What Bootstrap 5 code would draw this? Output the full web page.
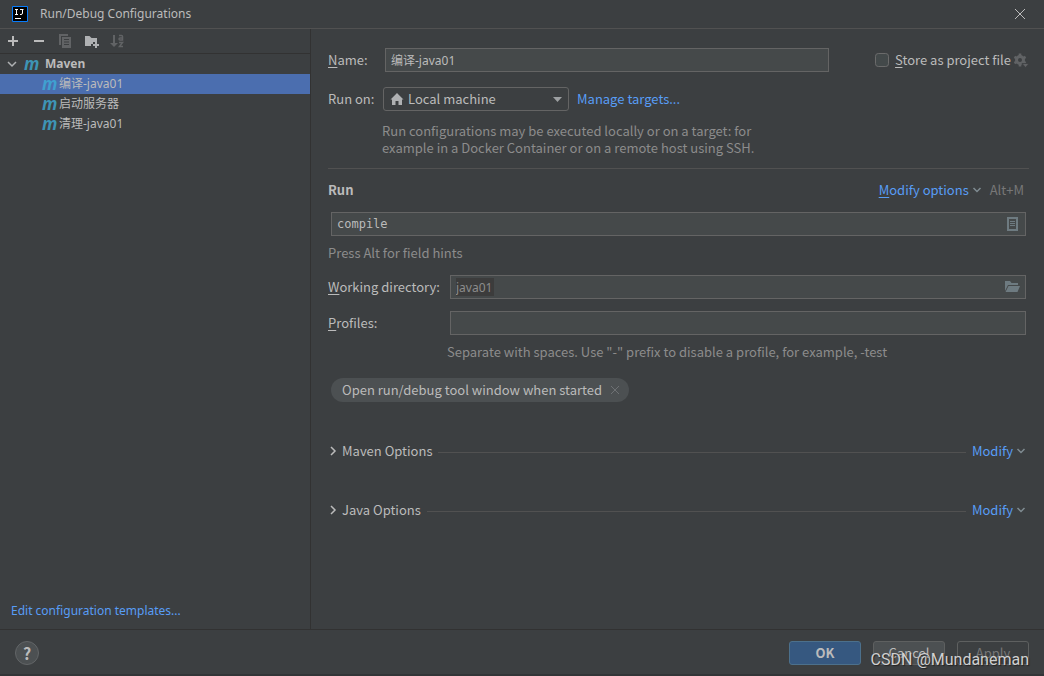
<!DOCTYPE html>
<html lang="en" data-bs-theme="dark">
<head>
<meta charset="utf-8">
<meta name="viewport" content="width=device-width, initial-scale=1">
<title>Run/Debug Configurations</title>
<link href="https://cdn.jsdelivr.net/npm/bootstrap@5.3.0/dist/css/bootstrap.min.css" rel="stylesheet">
<style>
  :root { --ink: #bbbbbb; --muted: #8c8c8c; --line: #323232; --rule: #515151; --edge: #646464; --field: #45494a; --blue: #589df6; }
  body { background: #3c3f41; color: var(--ink); font: 13px/18px "Noto Sans CJK SC", sans-serif; border-bottom: 2px solid #323537; }
  a, a:hover { color: var(--blue); text-decoration: none; }
  button { color: inherit; }
  .icon-btn { width: 16px; height: 16px; padding: 0; border: 0; background: none; display: block; }
  .icon-btn.narrow { width: 10px; }
  svg { display: block; }
  .ui-small { font: 12px/20px "Noto Sans", "Noto Sans CJK SC", sans-serif; }
  .titlebar { height: 29px; border-bottom: 1px solid var(--rule); padding: 0 16px 0 12px; gap: 12px; }
  .titlebar .caption { font-size: 12px; color: var(--ink); }
  .section-title { font-size: 13px; color: var(--ink); }
  .sidebar { width: 311px; border-right: 1px solid var(--line); }
  .tools { height: 25px; gap: 10px; padding: 0 5px; border-bottom: 1px solid var(--line); }
  .tree-row { height: 20px; }
  .tree-row.leaf { padding-left: 42px; }
  .tree-row.selected { background: #4b6eaf; }
  .m-icon { font: italic bold 17px/18px "Noto Sans", sans-serif; color: #3e94b5; width: 17px; }
  .selected .m-icon { color: #40a0d0; }
  .editor { padding: 19px 15px 0 17px; }
  .mnemonic { text-decoration: underline; text-underline-offset: 2px; }
  .field, .field:focus { height: 24px; padding: 0 5px; background-color: var(--field); border: 1px solid var(--edge); border-radius: 0; color: var(--ink); font-size: 13px; box-shadow: none; }
  .field.ui-small { font-size: 12px; }
  .field.mono { font-family: "DejaVu Sans Mono", monospace; font-size: 12px; }
  .field.macro { color: var(--muted); background: linear-gradient(#3c3c3c, #3c3c3c) 5px 2px / 38px 18px no-repeat var(--field); }
  .field.with-icon { padding-right: 28px; }
  .field-icon { right: 5px; top: 4px; }
  .target, .target:focus { width: 186px; height: 24px; padding: 0 24px 0 24px; border: 1px solid var(--edge); border-radius: 3px; color: var(--ink); font-size: 13px; line-height: 20px; box-shadow: none;
    background: url("data:image/svg+xml,%3Csvg xmlns='http://www.w3.org/2000/svg' width='10' height='6'%3E%3Cpath d='M0 0h10L5 6z' fill='%239da0a2'/%3E%3C/svg%3E") right 6px center / 9px 5px no-repeat #3c3f41; }
  .home { left: 6px; top: 4px; }
  .check, .check:checked { width: 14px; height: 14px; margin: 0 0 0 46px; border: 1px solid #6b6b6b; border-radius: 2px; background-color: #43494a; }
  .store-label { margin: 0 2px 0 6px; }
  .hint { color: var(--muted); }
  .shortcut { color: #777777; margin: 0 5px; }
  .target-help { margin: 11px 0 0 54px; width: 390px; line-height: 17px; }
  .divider { border-top: 1px solid var(--rule); margin: 12px 0; }
  .inset { margin-left: 3px; }
  .inset-end { margin-right: 3px; }
  .label-name { width: 57px; }
  .label-target { width: 55px; }
  .label-col { width: 122px; }
  .gap-s { margin-top: 12px; }
  .gap-m { margin-top: 13px; }
  .gap-l { margin-top: 15px; }
  .tag { height: 24px; border-radius: 12px; background: #4c5052; padding: 0 9px 0 11px; gap: 8px; }
  .rule { height: 1px; background: var(--rule); margin: 2px 6px 0; }
  .profiles-hint { margin: 8px 0 17px 119px; }
  .fold { padding-top: 41px; }
  .fold-first { padding-top: 40px; }
  .footer { height: 45px; border-top: 1px solid var(--line); padding: 2px 15px 0; gap: 12px; }
  .help { width: 24px; height: 24px; border: 1px solid #626567; background: #4c5052; border-radius: 50%; font-weight: bold; font-size: 16px; line-height: 20px; padding: 0; }
  .action { --bs-btn-bg: #4c5052; --bs-btn-color: #bbbbbb; --bs-btn-border-color: #5e6060; --bs-btn-disabled-color: #777777; --bs-btn-disabled-bg: transparent; --bs-btn-disabled-border-color: #5e6060; --bs-btn-disabled-opacity: 1;
    width: 72px; height: 24px; padding: 0; border-radius: 3px; font-size: 13px; line-height: 22px; }
  .action.ok { --bs-btn-bg: #365880; --bs-btn-border-color: #4c708c; font-weight: bold; }
  .watermark { right: 15px; bottom: 4px; font: 16px/20px Roboto, sans-serif; color: #d0d0d0; text-shadow: 1px 1px 1px #222222; pointer-events: none; }
</style>
</head>
<body class="d-flex flex-column min-vh-100 position-relative">
<header class="titlebar d-flex align-items-center">
  <svg width="16" height="16" viewBox="0 0 16 16"><path fill="#000" stroke="#087cfa" d="M.5.5h15v15H.5z"/><path stroke="#fff" fill="none" d="M3 3.500h3M4.500 3v5M3 8.500h3M8 3.500h3.500M10.500 3v4q0 1.500-1.500 1.500H8M3 12.500h6"/></svg>
  <h1 class="ui-small caption mb-0 me-auto">Run/Debug Configurations</h1>
  <button class="icon-btn" aria-label="Close"><svg width="16" height="16" viewBox="0 0 16 16"><path stroke="#bbb" fill="none" d="m3 3 10 10M13 3 3 13"/></svg></button>
</header>

<div class="d-flex flex-grow-1">
  <aside class="sidebar d-flex flex-column flex-shrink-0">
    <div class="tools d-flex align-items-center">
      <button class="icon-btn" aria-label="Add"><svg width="16" height="16"><path d="M3 8h10M8 3v10" stroke="#bbb" stroke-width="2"/></svg></button>
      <button class="icon-btn" aria-label="Remove"><svg width="16" height="16"><path d="M3 8h10" stroke="#bbb" stroke-width="2"/></svg></button>
      <button class="icon-btn" aria-label="Copy" disabled><svg width="16" height="16"><path fill="#616365" fill-rule="evenodd" d="M2 1h9v2H4v9H2zM5 4h9v11H5zM7 6v1h5V6zm0 2.500v1h5v-1zM7 11v1h5v-1z"/></svg></button>
      <button class="icon-btn" aria-label="New folder"><svg width="16" height="16"><path fill="#afb1b3" d="M2 3h4.500l2 2H14v4h-4v2H8v2H2z"/><path d="M10 12h6M13 9v6" stroke="#afb1b3" stroke-width="2"/></svg></button>
      <button class="icon-btn" aria-label="Sort" disabled><svg width="16" height="16" fill="none" stroke="#616365"><path stroke-width="2" d="M5 2v9"/><path fill="#616365" stroke="none" d="M1 10h8l-4 4z"/><path stroke-width="1.500" d="M10 2.500h2.500q1 0 1 1V7H11q-1 0-1-1t1-1h2.500M10 9.500h3.500l-3 4H14"/></svg></button>
    </div>
    <div class="ui-small" role="tree" aria-label="Configurations">
      <div class="tree-row d-flex align-items-center fw-bold" role="treeitem" aria-expanded="true">
        <svg class="mx-1" width="16" height="16"><path d="m4 6 4 4 4-4" fill="none" stroke="#afb1b3" stroke-width="1.500"/></svg>
        <span class="m-icon" aria-hidden="true">m</span><span class="ps-1">Maven</span>
      </div>
      <div class="tree-row leaf selected d-flex align-items-center" role="treeitem" aria-selected="true"><span class="m-icon" aria-hidden="true">m</span>编译-java01</div>
      <div class="tree-row leaf d-flex align-items-center" role="treeitem"><span class="m-icon" aria-hidden="true">m</span>启动服务器</div>
      <div class="tree-row leaf d-flex align-items-center" role="treeitem"><span class="m-icon" aria-hidden="true">m</span>清理-java01</div>
    </div>
    <a href="#" class="ui-small mt-auto mb-2 ps-2 inset">Edit configuration templates...</a>
  </aside>

  <main class="editor flex-grow-1">
    <div class="d-flex align-items-center">
      <label for="name" class="label-name"><span class="mnemonic">N</span>ame:</label>
      <input id="name" class="field ui-small form-control flex-grow-1 w-auto" value="编译-java01">
      <input id="store" type="checkbox" class="check form-check-input flex-shrink-0">
      <label for="store" class="store-label text-nowrap"><span class="mnemonic">S</span>tore as project file</label>
      <button class="icon-btn flex-shrink-0 me-0" aria-label="Storage options"><svg width="16" height="16"><circle cx="7" cy="8" r="3.500" fill="none" stroke="#616365" stroke-width="3"/><path d="M7 1.500v3M7 11.500v3M1.400 4.800 4 6.300M10 9.700l2.600 1.500M1.400 11.200 4 9.700M10 6.300l2.600-1.500" stroke="#616365" stroke-width="2.600"/><path fill="#616365" stroke="#3c3f41" stroke-width=".8" d="M9 11.500h7L12.500 15.500z"/></svg></button>
    </div>
    <div class="gap-l d-flex align-items-center">
      <label for="target" class="label-target text-nowrap">Run on:</label>
      <div class="position-relative">
        <select id="target" class="target form-select"><option>Local machine</option></select>
        <svg class="home position-absolute pe-none" width="16" height="16"><path fill="#afb1b3" d="M8 2 1.500 8.500H3V14h3.500v-4h3v4H13V8.500h1.500z"/></svg>
      </div>
      <a href="#" class="ms-2">Manage targets...</a>
    </div>
    <p class="hint target-help">Run configurations may be executed locally or on a target: for example in a Docker Container or on a remote host using SSH.</p>
    <div class="divider"></div>
    <div class="d-flex align-items-center">
      <h2 class="section-title mb-0 me-auto fw-bold">Run</h2>
      <a href="#"><span class="mnemonic">M</span>odify options</a>
      <svg width="16" height="16"><path d="m4.500 6 3.500 3.500L11.500 6" fill="none" stroke="#7f8b91" stroke-width="1.500"/></svg>
      <span class="shortcut">Alt+M</span>
    </div>
    <div class="position-relative gap-m inset inset-end">
      <input aria-label="Command line" class="field mono with-icon form-control" value="compile">
      <svg class="field-icon position-absolute" width="16" height="16"><path fill="#6e7b81" fill-rule="evenodd" d="M2 1h11v14H2zM4 3v10h7V3zm1 2h5v1H5zm0 2h5v1H5zm0 2h5v1H5z"/></svg>
    </div>
    <p class="hint mb-0 mt-2">Press Alt for field hints</p>
    <div class="d-flex align-items-center gap-m inset-end">
      <label for="wd" class="label-col text-nowrap flex-shrink-0"><span class="mnemonic">W</span>orking directory:</label>
      <div class="position-relative flex-grow-1">
        <input id="wd" class="field macro ui-small with-icon form-control" value="java01">
        <svg class="field-icon position-absolute" width="16" height="16"><path fill="#6e7b81" d="M0 2h5l1.500 2H13v2H3l-3 6zM3.500 7H15l-2.500 6H.5z"/></svg>
      </div>
    </div>
    <div class="d-flex align-items-center gap-s inset-end">
      <label for="profiles" class="label-col flex-shrink-0"><span class="mnemonic">P</span>rofiles:</label>
      <input id="profiles" class="field form-control">
    </div>
    <p class="hint profiles-hint">Separate with spaces. Use "-" prefix to disable a profile, for example, -test</p>
    <div class="tag d-inline-flex align-items-center inset">Open run/debug tool window when started
      <button class="icon-btn narrow" aria-label="Remove option"><svg width="10" height="16"><path d="m1 4 8 8M9 4l-8 8" stroke="#6e7174"/></svg></button>
    </div>
    <section class="fold-first d-flex align-items-center">
      <svg width="10" height="16"><path d="m3 4 4 4-4 4" fill="none" stroke="#bbb" stroke-width="1.500"/></svg>
      <span class="ms-1">Maven Options</span>
      <div class="rule flex-grow-1"></div>
      <a href="#">Modify</a>
      <svg width="16" height="16"><path d="m4.500 6 3.500 3.500L11.500 6" fill="none" stroke="#7f8b91" stroke-width="1.500"/></svg>
    </section>
    <section class="fold d-flex align-items-center">
      <svg width="10" height="16"><path d="m3 4 4 4-4 4" fill="none" stroke="#bbb" stroke-width="1.500"/></svg>
      <span class="ms-1">Java Options</span>
      <div class="rule flex-grow-1"></div>
      <a href="#">Modify</a>
      <svg width="16" height="16"><path d="m4.500 6 3.500 3.500L11.500 6" fill="none" stroke="#7f8b91" stroke-width="1.500"/></svg>
    </section>
  </main>
</div>

<footer class="footer d-flex align-items-center">
  <button class="help me-auto" aria-label="Help">?</button>
  <button class="action ok btn">OK</button>
  <button class="action btn">Cancel</button>
  <button class="action btn" disabled>Apply</button>
</footer>
<div class="watermark position-absolute">CSDN @Mundaneman</div>
<script src="https://cdn.jsdelivr.net/npm/bootstrap@5.3.0/dist/js/bootstrap.bundle.min.js"></script>
</body>
</html>
